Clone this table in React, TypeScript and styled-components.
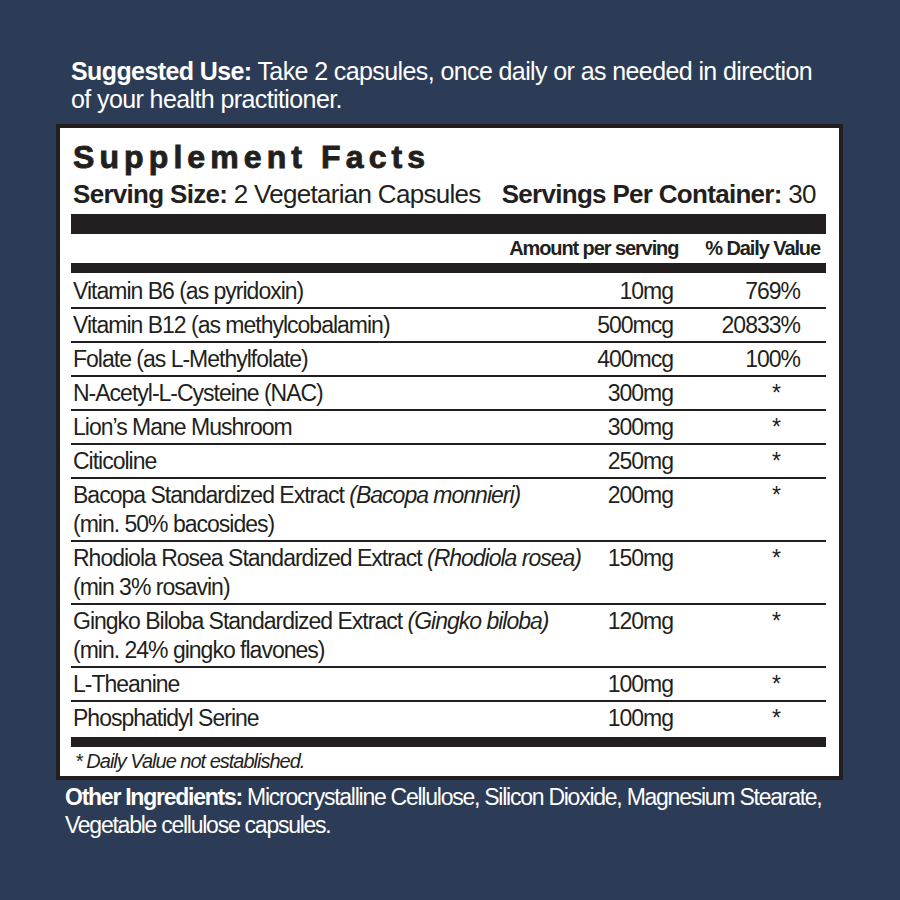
import React from 'react';
import styled, { createGlobalStyle } from 'styled-components';

interface Ingredient {
  name: string;
  latin?: string;
  note?: string;
  amount: string;
  dv: string;
}

const ingredients: Array<Ingredient> = [
  { name: 'Vitamin B6 (as pyridoxin)', amount: '10mg', dv: '769%' },
  { name: 'Vitamin B12 (as methylcobalamin)', amount: '500mcg', dv: '20833%' },
  { name: 'Folate (as L-Methylfolate)', amount: '400mcg', dv: '100%' },
  { name: 'N-Acetyl-L-Cysteine (NAC)', amount: '300mg', dv: '*' },
  { name: 'Lion’s Mane Mushroom', amount: '300mg', dv: '*' },
  { name: 'Citicoline', amount: '250mg', dv: '*' },
  { name: 'Bacopa Standardized Extract', latin: 'Bacopa monnieri', note: '(min. 50% bacosides)', amount: '200mg', dv: '*' },
  { name: 'Rhodiola Rosea Standardized Extract', latin: 'Rhodiola rosea', note: '(min 3% rosavin)', amount: '150mg', dv: '*' },
  { name: 'Gingko Biloba Standardized Extract', latin: 'Gingko biloba', note: '(min. 24% gingko flavones)', amount: '120mg', dv: '*' },
  { name: 'L-Theanine', amount: '100mg', dv: '*' },
  { name: 'Phosphatidyl Serine', amount: '100mg', dv: '*' },
];

const GlobalStyle = createGlobalStyle`
  body {
    margin: 0;
    background: #2d3c56;
    font-family: "Liberation Sans", Arial, sans-serif;
  }
`;

const Page = styled.div`
  width: 900px;
  height: 900px;
  box-sizing: border-box;
  padding-top: 57px;
  background: #2d3c56;
  color: #ffffff;
`;

const Blurb = styled.p<{ indent: number; size: number; tracking: number }>`
  margin: 0;
  padding-left: ${props => props.indent}px;
  font-size: ${props => props.size}px;
  line-height: 28px;
  letter-spacing: ${props => props.tracking}px;
  white-space: nowrap;
`;

const Label = styled.b`
  font-weight: 700;
`;

const Panel = styled.div`
  width: 787px;
  box-sizing: border-box;
  margin: 11px 0 3px 56px;
  padding: 13px 13px 3px 11px;
  background: #ffffff;
  border: 4px solid #231f20;
  color: #231f20;
`;

const Title = styled.h1`
  margin: 0 0 0 2px;
  font-size: 32px;
  line-height: 32px;
  font-weight: 700;
  letter-spacing: 5.1px;
  -webkit-text-stroke: 0.9px #231f20;
`;

const ServingLine = styled.div`
  display: flex;
  gap: 21px;
  margin: 8px 0 7px 2px;
  font-size: 26px;
  line-height: 26px;
  letter-spacing: -0.7px;
`;

const Bar = styled.div<{ thick: number }>`
  height: ${props => props.thick}px;
  background: #231f20;
`;

const HeadRow = styled.div`
  display: flex;
  justify-content: flex-end;
  height: 29px;
  font-size: 20px;
  line-height: 29px;
  font-weight: 700;
  letter-spacing: -1.1px;
`;

const HeadCell = styled.span<{ gapRight: number }>`
  margin-right: ${props => props.gapRight}px;
`;

const Body = styled.div`
  padding: 2px 0 3px;
`;

const Row = styled.div`
  display: grid;
  grid-template-columns: 1fr auto 153px;
  padding: 2px 0 1px;
  font-size: 23px;
  line-height: 29px;
  letter-spacing: -1px;
  border-bottom: 2px solid #231f20;

  &:last-child {
    border-bottom: none;
  }
`;

const Name = styled.div`
  padding-left: 2px;
  white-space: nowrap;
`;

const Latin = styled.i`
  font-style: italic;
`;

const Amount = styled.div`
  text-align: right;
`;

const Daily = styled.div<{ star: boolean }>`
  text-align: right;
  padding-right: ${props => (props.star ? 46 : 26)}px;
`;

const Footnote = styled.div`
  margin: 2px 0 0 4px;
  font-size: 20px;
  line-height: 24px;
  font-style: italic;
  letter-spacing: -1px;
`;

function App() {
  return (
    <Page>
      <GlobalStyle />
      <Blurb indent={71} size={25} tracking={-0.6}>
        <Label>Suggested Use:</Label> Take 2 capsules, once daily or as needed in direction
        <br />
        of your health practitioner.
      </Blurb>
      <Panel>
        <Title>Supplement Facts</Title>
        <ServingLine>
          <span><Label>Serving Size:</Label> 2 Vegetarian Capsules</span>
          <span><Label>Servings Per Container:</Label> 30</span>
        </ServingLine>
        <Bar thick={20} />
        <HeadRow>
          <HeadCell gapRight={27}>Amount per serving</HeadCell>
          <HeadCell gapRight={6}>% Daily Value</HeadCell>
        </HeadRow>
        <Bar thick={10} />
        <Body>
          {ingredients.map((item, index) => (
            <Row key={index}>
              <Name>
                {item.name}
                {item.latin && <> <Latin>({item.latin})</Latin></>}
                {item.note && <><br />{item.note}</>}
              </Name>
              <Amount>{item.amount}</Amount>
              <Daily star={item.dv === '*'}>{item.dv}</Daily>
            </Row>
          ))}
        </Body>
        <Bar thick={10} />
        <Footnote>* Daily Value not established.</Footnote>
      </Panel>
      <Blurb indent={65} size={23} tracking={-1.25}>
        <Label>Other Ingredients:</Label> Microcrystalline Cellulose, Silicon Dioxide, Magnesium Stearate,
        <br />
        Vegetable cellulose capsules.
      </Blurb>
    </Page>
  );
}

export default App;
